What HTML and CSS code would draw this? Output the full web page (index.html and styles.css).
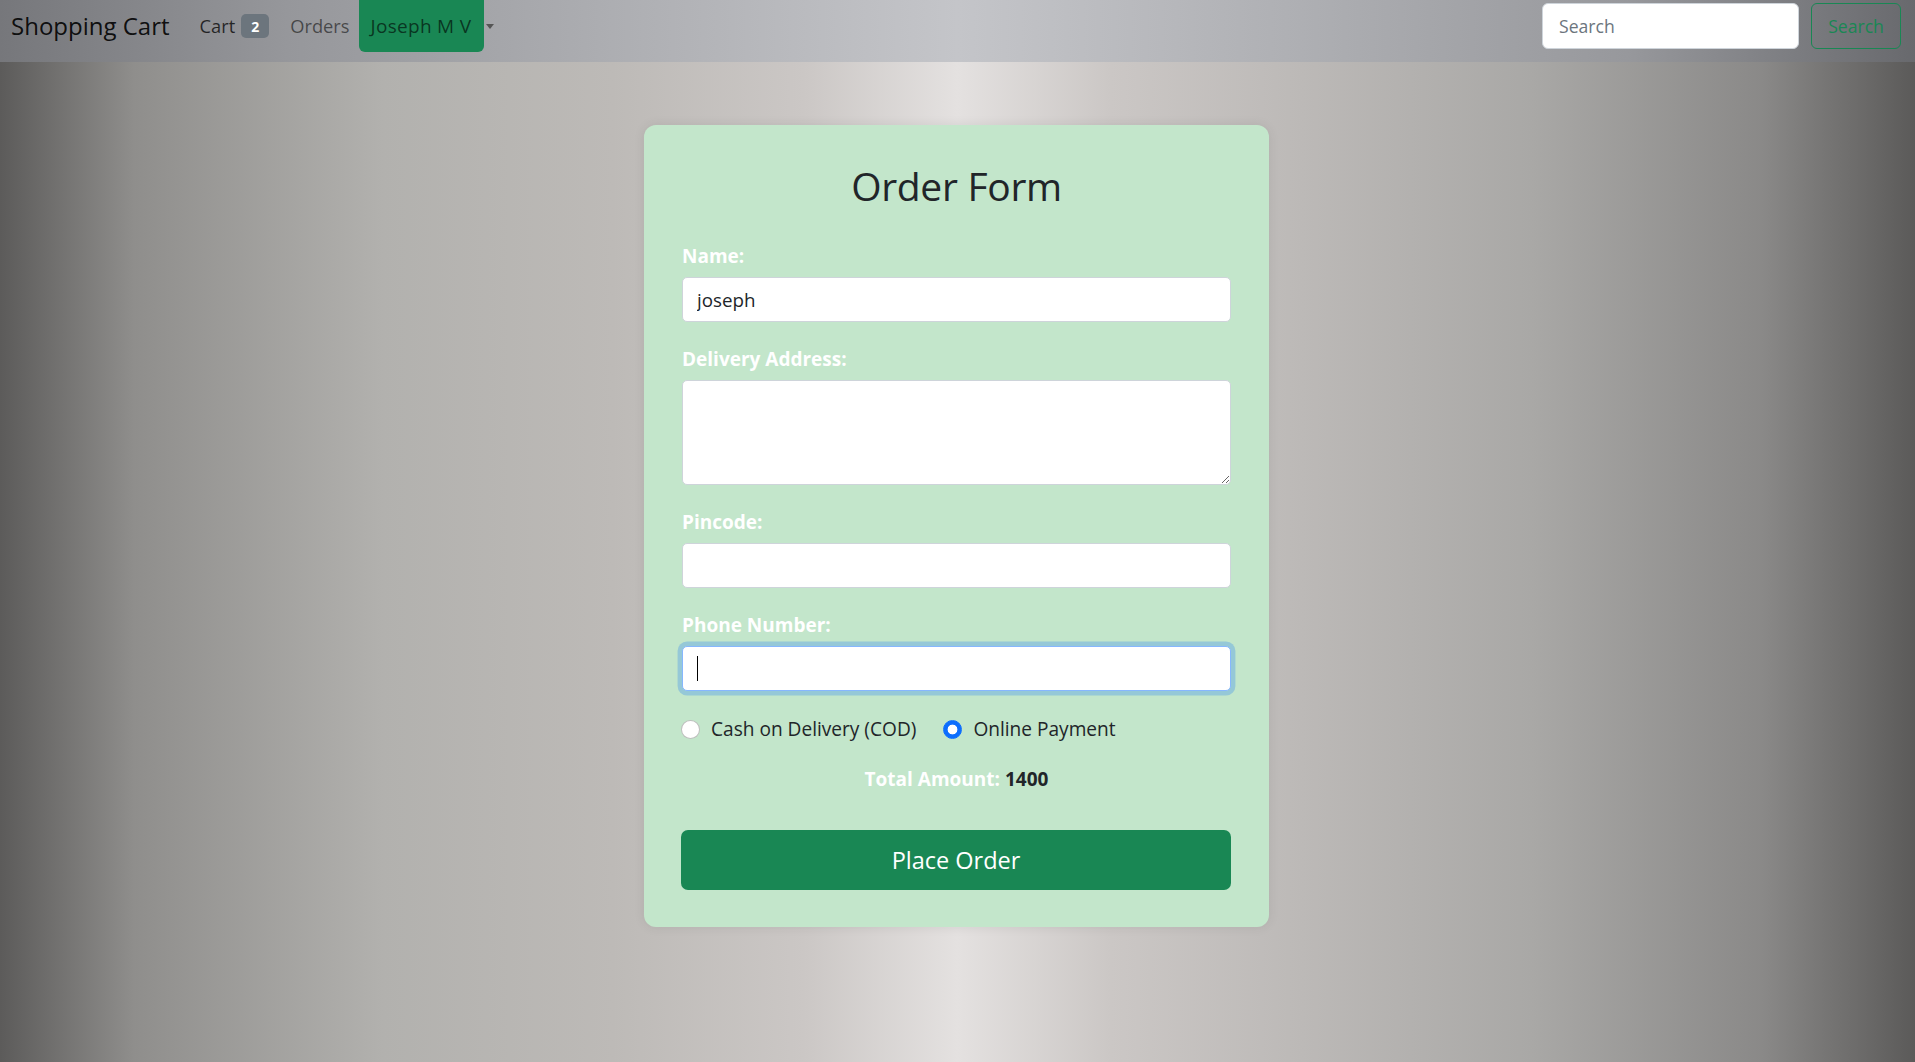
FILE: index.html
```html
<!DOCTYPE html>
<html lang="en">
<head>
<meta charset="utf-8">
<title>Shopping Cart - Order Form</title>
<link rel="stylesheet" href="styles.css">
</head>
<body>
<nav class="navbar">
  <div class="nav-left">
    <a class="brand" href="#">Shopping Cart</a>
    <ul class="nav-links">
      <li class="nav-item"><a class="nav-link active" href="#">Cart</a><span class="badge">2</span></li>
      <li class="nav-item"><a class="nav-link orders" href="#">Orders</a></li>
      <li class="nav-item dropdown"><a class="nav-link user" href="#">Joseph M V</a><span class="caret"></span></li>
    </ul>
  </div>
  <form class="search">
    <input class="search-input" type="text" placeholder="Search">
    <button class="search-btn" type="button">Search</button>
  </form>
</nav>

<main class="page">
  <section class="card">
    <h1 class="title">Order Form</h1>
    <form class="order-form">
      <div class="field">
        <label class="label">Name:</label>
        <input class="control" type="text" value="joseph">
      </div>
      <div class="field">
        <label class="label">Delivery Address:</label>
        <textarea class="control area"></textarea>
      </div>
      <div class="field">
        <label class="label">Pincode:</label>
        <input class="control" type="text">
      </div>
      <div class="field last">
        <label class="label">Phone Number:</label>
        <div class="focus-wrap">
          <input class="control focused" type="text">
          <span class="caret-line"></span>
        </div>
      </div>
      <div class="payments">
        <label class="pay-option"><input class="radio" type="radio" name="pay"><span>Cash on Delivery (COD)</span></label>
        <label class="pay-option"><input class="radio" type="radio" name="pay" checked><span>Online Payment</span></label>
      </div>
      <p class="total"><span class="total-label">Total Amount:</span> <span class="total-value">1400</span></p>
      <button class="place-btn" type="button">Place Order</button>
    </form>
  </section>
</main>
</body>
</html>
```

FILE: styles.css
```css
* { box-sizing: border-box; }

html, body {
  margin: 0;
  padding: 0;
}

body {
  min-height: 1062px;
  font-family: "Open Sans", "Noto Sans", sans-serif;
  color: #212529;
  background: linear-gradient(to right,
    #5c5b5a 0%,
    #8f8e8c 7%,
    #b2b1ae 20%,
    #bdbab7 32%,
    #cbc7c5 42%,
    #e4e1e0 50%,
    #cbc7c5 58%,
    #bcb9b7 68%,
    #a9a8a6 80%,
    #8a8988 92%,
    #5b5a59 100%);
}

/* ---------- navbar ---------- */
.navbar {
  display: flex;
  justify-content: space-between;
  align-items: flex-start;
  height: 62px;
  padding: 0 14px 0 11px;
  background: linear-gradient(to right,
    #76777b 0%,
    #96979b 15%,
    #adaeb2 32%,
    #c4c5c9 50%,
    #aeafb3 68%,
    #97989c 85%,
    #68696d 100%);
}

.nav-left {
  display: flex;
  align-items: center;
  height: 52px;
}

.brand {
  font-size: 24px;
  line-height: 36px;
  color: rgba(0, 0, 0, 0.9);
  text-decoration: none;
  margin-right: 30px;
}

.nav-links {
  display: flex;
  align-items: center;
  height: 52px;
  list-style: none;
  margin: 0;
  padding: 0;
}

.nav-item {
  display: flex;
  align-items: center;
  height: 52px;
}

.nav-link {
  font-size: 18.3px;
  line-height: 26.4px;
  color: rgba(0, 0, 0, 0.55);
  text-decoration: none;
}

.nav-link.active {
  color: rgba(0, 0, 0, 0.75);
}

.badge {
  display: inline-flex;
  align-items: center;
  justify-content: center;
  width: 28px;
  height: 24px;
  margin-left: 6px;
  margin-right: 21px;
  border-radius: 5px;
  background: #6c757d;
  color: #fff;
  font-size: 14px;
  font-weight: 700;
}

.orders {
  margin-right: 9px;
}

.user {
  display: flex;
  align-items: center;
  height: 52px;
  width: 125px;
  padding: 0 0 0 12px;
  background: #198754;
  border-radius: 0 0 6px 6px;
  color: rgba(0, 0, 0, 0.62);
  font-size: 19px;
  letter-spacing: 0.3px;
  white-space: nowrap;
}

.caret {
  width: 0;
  height: 0;
  margin-left: 2px;
  border-left: 4.5px solid transparent;
  border-right: 4.5px solid transparent;
  border-top: 5px solid #555;
}

.search {
  display: flex;
  align-items: center;
  gap: 12px;
  margin: 3px 0 0 0;
}

.search-input {
  width: 257px;
  height: 46px;
  padding: 0 16px;
  border: 1px solid #ced4da;
  border-radius: 6px;
  background: #fff;
  font-family: inherit;
  font-size: 17.6px;
  color: #212529;
  outline: none;
}

.search-input::placeholder {
  color: #6c757d;
}

.search-btn {
  width: 90px;
  height: 46px;
  padding: 0;
  border: 1px solid #198754;
  border-radius: 6px;
  background: transparent;
  color: #198754;
  font-family: inherit;
  font-size: 17.6px;
}

/* ---------- page / card ---------- */
.page {
  display: flex;
  justify-content: center;
  padding-top: 63px;
  padding-right: 2px;
}

.card {
  width: 625px;
  padding: 36px 38px 37px 38px;
  background: #c3e6cb;
  border-radius: 12px;
  box-shadow: 0 0 12px rgba(0, 0, 0, 0.08);
}

.title {
  margin: 0 0 31.6px 0;
  font-size: 39px;
  line-height: 50.4px;
  font-weight: 500;
  letter-spacing: -0.3px;
  text-align: center;
  color: #212529;
}

.order-form {
  display: flex;
  flex-direction: column;
}

.field {
  display: flex;
  flex-direction: column;
  margin-bottom: 24px;
}

.field.last {
  margin-bottom: 25px;
}

.label {
  display: block;
  margin-bottom: 7.6px;
  font-size: 19px;
  line-height: 26.4px;
  font-weight: 700;
  color: #fff;
}

.control {
  display: block;
  width: 100%;
  height: 45px;
  padding: 0 14px;
  border: 1px solid #ced4da;
  border-radius: 5px;
  background: #fff;
  font-family: inherit;
  font-size: 18.8px;
  color: #212529;
  outline: none;
}

.area {
  height: 105px;
  resize: vertical;
}

.focus-wrap {
  position: relative;
}

.focused {
  border-color: #86b7fe;
  box-shadow: 0 0 0 4.4px rgba(13, 110, 253, 0.25);
}

.caret-line {
  position: absolute;
  left: 15px;
  top: 10px;
  width: 1px;
  height: 25px;
  background: #000;
}

.payments {
  display: flex;
  align-items: center;
  height: 26.4px;
  margin-bottom: 24px;
}

.pay-option {
  display: flex;
  align-items: center;
  font-size: 19.1px;
  line-height: 26.4px;
  color: #212529;
  margin-right: 28px;
}

.radio {
  appearance: none;
  -webkit-appearance: none;
  width: 19px;
  height: 19px;
  margin: 0 11px 0 -1px;
  border: 1px solid rgba(0, 0, 0, 0.25);
  border-radius: 50%;
  background: #fff;
}

.radio:checked {
  border-color: #0d6efd;
  background: radial-gradient(circle, #fff 0 4.6px, #0d6efd 5.2px);
}

.total {
  margin: 0 0 37.6px 0;
  font-size: 19px;
  line-height: 26.4px;
  font-weight: 700;
  text-align: center;
}

.total-label {
  color: #fff;
}

.total-value {
  color: #212529;
}

.place-btn {
  width: 550px;
  height: 60px;
  margin-left: -1px;
  padding: 0;
  border: none;
  border-radius: 7px;
  background: #198754;
  color: #fff;
  font-family: inherit;
  font-size: 23.5px;
}
```
